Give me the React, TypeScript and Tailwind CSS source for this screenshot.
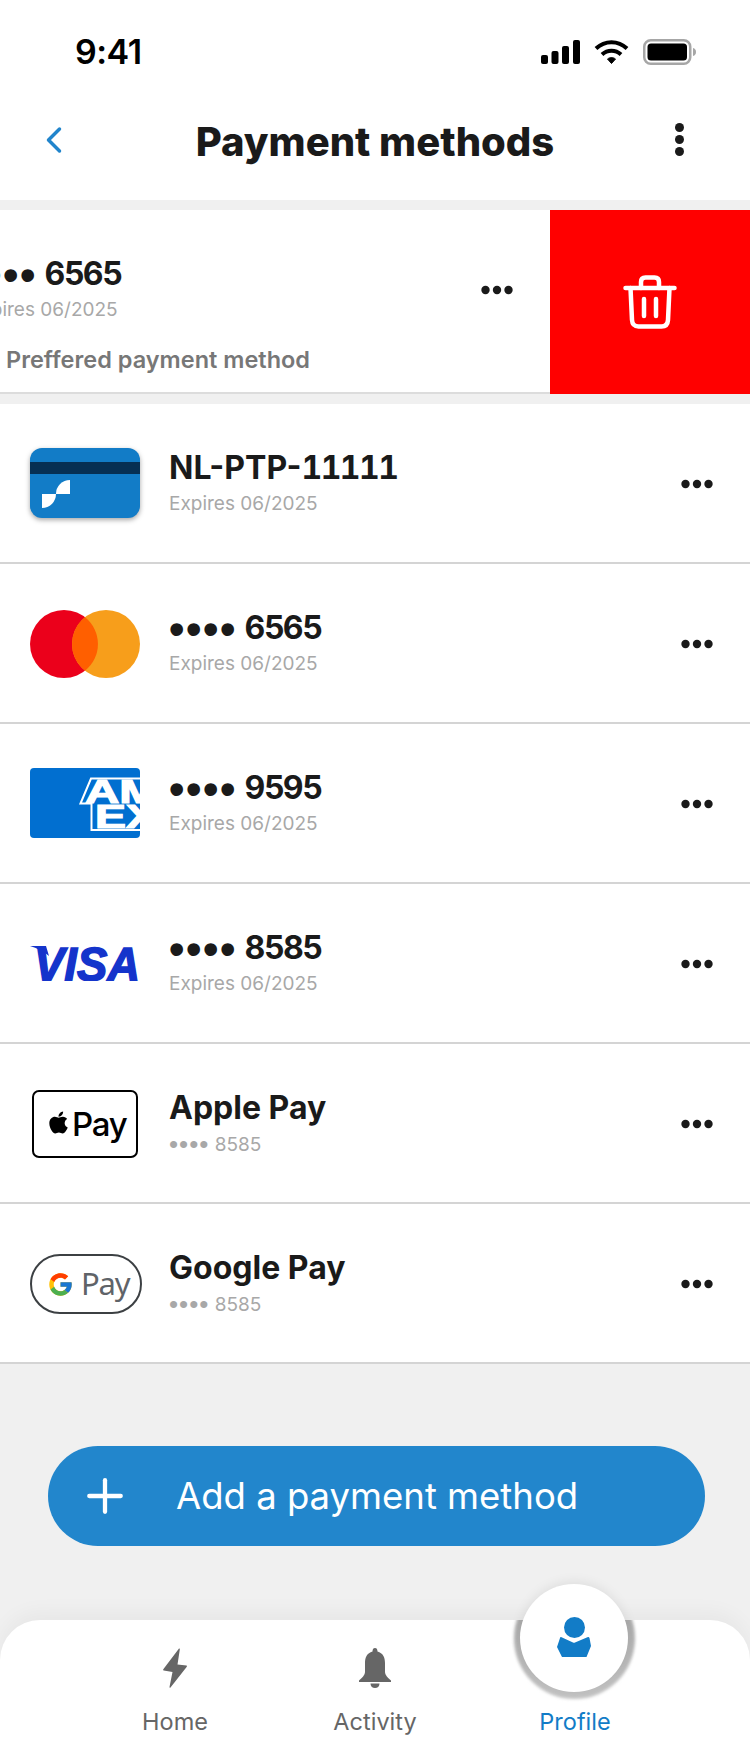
import { ChevronLeft, Plus } from "lucide-react";
import { FaApple } from "react-icons/fa";
import { FcGoogle } from "react-icons/fc";
import type { ReactNode } from "react";

const sans = "font-['Inter','Noto_Sans',sans-serif]";

function Dots({ className }: { className?: string }) {
	return (
		<svg width="32" height="10" viewBox="0 0 32 10" className={className}>
			<circle cx="4.5" cy="5" r="4.2" fill="#1a1a1a" />
			<circle cx="16" cy="5" r="4.2" fill="#1a1a1a" />
			<circle cx="27.5" cy="5" r="4.2" fill="#1a1a1a" />
		</svg>
	);
}

function StatusBar() {
	return (
		<div className="h-[86px] pt-[18px] pl-[75px] pr-[54px] flex items-center justify-between">
			<span className="font-['Inter',sans-serif] text-[34px] font-semibold leading-none text-black tracking-[-0.5px]">
				9:41
			</span>
			<div className="flex items-center gap-[14px]">
				<svg width="39" height="24" viewBox="0 0 39 24" fill="#000">
					<rect x="0" y="15" width="7" height="9" rx="2" />
					<rect x="10.5" y="11" width="7" height="13" rx="2" />
					<rect x="21" y="6" width="7" height="18" rx="2" />
					<rect x="32" y="0" width="7" height="24" rx="2" />
				</svg>
				<svg width="35" height="24" viewBox="0 0 35 24" fill="none" stroke="#000" strokeWidth="4">
					<path d="M2 8.5C11 0 24 0 33 8.5" />
					<path d="M8 14.5C13.500 9.500 21.500 9.500 27 14.500" />
					<path d="M13.500 19L17.500 23.500L21.500 19C19 17 16 17 13.500 19Z" fill="#000" strokeWidth="1" />
				</svg>
				<svg width="53" height="26" viewBox="0 0 53 26">
					<rect x="1.250" y="1.250" width="46" height="23.500" rx="6.500" fill="none" stroke="#a6a6a6" strokeWidth="2.500" />
					<rect x="4.500" y="4.500" width="39.500" height="17" rx="3.500" fill="#000" />
					<path d="M50 9C52 9.500 53 11 53 13C53 15 52 16.500 50 17Z" fill="#a6a6a6" />
				</svg>
			</div>
		</div>
	);
}

function Header() {
	return (
		<header className="h-[114px] grid grid-cols-[1fr_auto_1fr] items-center px-[66px]">
			<ChevronLeft size={44} strokeWidth={1.9} className="text-[#2185cc] -mt-[6px] -ml-[34px]" />
			<h1 className={`${sans} text-[40px] font-extrabold text-[#1a1a1a] leading-none -mt-[2px] whitespace-nowrap`}>
				Payment methods
			</h1>
			<div className="flex flex-col items-end gap-[3px] -mt-[8px]">
				<span className="size-[9px] rounded-full bg-[#1a1a1a]" />
				<span className="size-[9px] rounded-full bg-[#1a1a1a]" />
				<span className="size-[9px] rounded-full bg-[#1a1a1a]" />
			</div>
		</header>
	);
}

function BrandCard() {
	return (
		<div className="relative w-[110px] h-[70px] rounded-[12px] bg-[#127cc7] shadow-[0_2px_5px_rgba(0,0,0,0.35)] overflow-hidden">
			<div className="mt-[14px] h-[12px] bg-[#062f53]" />
			<svg width="28" height="28" viewBox="0 0 28 28" className="ml-[12px] mt-[6px]" fill="#fff">
				<path d="M0 14H14A14 14 0 0 1 0 28Z" />
				<path d="M28 0V14H14A14 14 0 0 1 28 0Z" />
			</svg>
		</div>
	);
}

function Mastercard() {
	return (
		<svg width="110" height="68" viewBox="0 0 110 68" className="block mt-[2px]">
			<circle cx="34" cy="34" r="34" fill="#eb001b" />
			<circle cx="76" cy="34" r="34" fill="#f79e1b" />
			<path d="M55 7.300A34 34 0 0 1 55 60.700A34 34 0 0 1 55 7.300Z" fill="#ff5f00" />
		</svg>
	);
}

function Amex() {
	return (
		<svg width="110" height="70" viewBox="0 0 110 70" className="block rounded-[4px]">
			<rect width="110" height="70" fill="#016fd0" />
			<path d="M50.500 35.500L61 10.500H112V62H61.500V35.500Z" fill="#016fd0" stroke="#fff" strokeWidth="2" />
			<text x="55" y="35" textLength="74" lengthAdjust="spacingAndGlyphs" fontFamily="Liberation Sans" fontWeight="700" fontSize="33" fill="#fff" stroke="#fff" strokeWidth="1.2">
				AM
			</text>
			<text x="65" y="60" textLength="62" lengthAdjust="spacingAndGlyphs" fontFamily="Liberation Sans" fontWeight="700" fontSize="33" fill="#fff" stroke="#fff" strokeWidth="1.2">
				EX
			</text>
		</svg>
	);
}

function Visa() {
	return (
		<svg width="110" height="36" viewBox="0 0 110 36" className="block">
			<path d="M0 1H16L19 11C13 6 7 3 0 1Z" fill="#1434cb" />
			<text
				x="4"
				y="35.500"
				fontFamily="Liberation Sans"
				fontWeight="700"
				fontStyle="italic"
				fontSize="49"
				textLength="106"
				lengthAdjust="spacingAndGlyphs"
				fill="#1434cb"
				stroke="#1434cb"
				strokeWidth="1.6"
			>
				VISA
			</text>
		</svg>
	);
}

function ApplePay() {
	return (
		<div className="ml-[2px] mt-[2px] w-[106px] h-[68px] rounded-[7px] border-[2.500px] border-black flex items-center pl-[12px]">
			<FaApple size={25} className="text-black -mt-[4px]" />
			<span className="font-['Inter',sans-serif] text-[33px] font-medium text-black leading-none tracking-[-1.2px] ml-[1px]">
				Pay
			</span>
		</div>
	);
}

function GooglePay() {
	return (
		<div className="mt-[2px] w-[112px] shrink-0 h-[60px] rounded-full border-[2.500px] border-[#3c4043] flex items-center pl-[15px]">
			<FcGoogle size={27} />
			<span className="font-['Noto_Sans',sans-serif] text-[31px] text-[#5f6368] leading-none tracking-[-1.2px] ml-[7px] -mt-[2px]">
				Pay
			</span>
		</div>
	);
}

function Masked({ last }: { last: string }) {
	return (
		<>
			<span className="font-['Liberation_Sans',sans-serif] text-[44px] tracking-[1.6px] align-[-5px]">••••</span>{" "}
			<span className="tracking-[-1.5px]">{last}</span>
		</>
	);
}

function MaskedSmall() {
	return (
		<>
			<span className="font-['Liberation_Sans',sans-serif] text-[26px] tracking-[1px] align-[-2px]">••••</span> 8585
		</>
	);
}

const rows: { logo: ReactNode; title: ReactNode; sub: ReactNode }[] = [
	{
		logo: <BrandCard />,
		title: (
			<>
				NL-PTP-<span className="tabular-nums tracking-[-1.5px]">11111</span>
			</>
		),
		sub: "Expires 06/2025",
	},
	{ logo: <Mastercard />, title: <Masked last="6565" />, sub: "Expires 06/2025" },
	{ logo: <Amex />, title: <Masked last="9595" />, sub: "Expires 06/2025" },
	{ logo: <Visa />, title: <Masked last="8585" />, sub: "Expires 06/2025" },
	{ logo: <ApplePay />, title: "Apple Pay", sub: <MaskedSmall /> },
	{ logo: <GooglePay />, title: "Google Pay", sub: <MaskedSmall /> },
];

function RowText({ title, sub }: { title: ReactNode; sub: ReactNode }) {
	return (
		<div className={`${sans} flex flex-col -mt-[1px]`}>
			<span className="h-[38px] text-[32px] font-bold leading-[38px] text-[#1a1a1a] whitespace-nowrap">{title}</span>
			<span className="h-[26px] text-[19px] leading-[26px] mt-[4px] text-[#a8a8a8] whitespace-nowrap">{sub}</span>
		</div>
	);
}

function SwipedRow() {
	return (
		<div className="mt-[10px] flex h-[184px]">
			<div className="w-[550px] bg-white border-b-2 border-[#dcdcdc] overflow-hidden pt-[46px] pl-[6px]">
				<div className="flex items-start -ml-[37px]">
					<RowText title={<Masked last="6565" />} sub="Expires 06/2025" />
					<Dots className="ml-auto mr-[37px] mt-[29px]" />
				</div>
				<p className={`${sans} mt-[23px] text-[23.5px] font-semibold leading-[28px] text-[#777]`}>
					Preffered payment method
				</p>
			</div>
			<div className="w-[200px] bg-[#ff0000] flex items-center justify-center">
				<svg width="54" height="54" viewBox="0 0 54 54" fill="none" stroke="#fff" strokeWidth="4.500" strokeLinecap="round" strokeLinejoin="round">
					<path d="M2.500 13H51.500" />
					<path d="M18 13V7C18 4 19.500 2.500 22.500 2.500H31.500C34.500 2.500 36 4 36 7V13" />
					<path d="M7.500 13L9 45C9.300 49.500 11.500 51.500 15.500 51.500H38.500C42.500 51.500 44.700 49.500 45 45L46.500 13" />
					<path d="M21 24V41M33 24V41" />
				</svg>
			</div>
		</div>
	);
}

function BottomNav() {
	return (
		<nav className="relative mt-auto h-[144px] rounded-t-[40px] bg-white shadow-[0_-8px_20px_rgba(0,0,0,0.04)]">
			<div className="absolute inset-0 overflow-hidden rounded-t-[40px]">
				<div className="absolute left-[514px] -top-[42px] size-[121px] rounded-full bg-gradient-to-b from-[#a0a0a0] to-[#c4c4c4] blur-[1.5px]" />
			</div>
			<div className="absolute left-[520px] -top-[36px] size-[108px] rounded-full bg-white flex items-center justify-center shadow-[0_-2px_12px_rgba(0,0,0,0.08)]">
				<svg width="34" height="40" viewBox="0 0 34 40" fill="#127cc7" className="-mt-[2px]">
					<circle cx="17.500" cy="10.500" r="10.500" />
					<path d="M4 20L16 25.500Q17 26 18 25.500L31 20Q32 19.700 32.500 21L34 29L29.500 40H5L0 30L3 21Q3.300 19.700 4 20Z" />
				</svg>
			</div>
			<div className={`${sans} relative grid grid-cols-3 px-[75px] pt-[28px] text-[23.5px] leading-[30px] text-[#666]`}>
				<div className="flex flex-col items-center">
					<svg width="24" height="40" viewBox="0 0 24 40" fill="#666">
						<path d="M16 0.500C16.500 0.300 17 0.800 16.800 1.500L14.500 16.500L23.500 17.500C24 17.600 24 18.300 23.800 18.700L7.500 39.500C7 40 6.300 39.700 6.500 39L9.500 24L0.700 22.500C0 22.300 0 21.700 0.300 21.200Z" />
					</svg>
					<span className="mt-[19px]">Home</span>
				</div>
				<div className="flex flex-col items-center">
					<svg width="32" height="40" viewBox="0 0 32 40" fill="#666">
						<path d="M16 0C17.500 0 18.500 1 18.500 3.500C24 5 26 9.500 26 15V24C26 27 29 30 32 32.500V34H0V32.500C3 30 6 27 6 24V15C6 9.500 8 5 13.500 3.500C13.500 1 14.500 0 16 0Z" />
						<path d="M11.500 35.500H20.500C20.500 38.500 18.500 40 16 40C13.500 40 11.500 38.500 11.500 35.500Z" />
					</svg>
					<span className="mt-[19px]">Activity</span>
				</div>
				<div className="flex flex-col items-center text-[#127cc7]">
					<span className="mt-[59px]">Profile</span>
				</div>
			</div>
		</nav>
	);
}

export default function App() {
	return (
		<div className="w-[750px] h-[1764px] flex flex-col bg-[#f0f0f0] overflow-hidden">
			<div className="bg-white">
				<StatusBar />
				<Header />
			</div>

			<SwipedRow />

			<div className="mt-[10px]">
				{rows.map((row, i) => (
					<div key={i} className="h-[160px] bg-white border-b-2 border-[#d4d4d4] flex items-center pl-[30px] pr-[37px]">
						<div className="w-[110px] shrink-0 flex justify-start">{row.logo}</div>
						<div className="ml-[29px]">
							<RowText title={row.title} sub={row.sub} />
						</div>
						<Dots className="ml-auto mt-[2px]" />
					</div>
				))}
			</div>

			<button className={`${sans} mt-[82px] ml-[48px] w-[657px] h-[100px] rounded-full bg-[#2286cc] flex items-center pl-[30px] text-white text-[36.5px] leading-none shrink-0`}>
				<Plus size={54} strokeWidth={1.900} />
				<span className="ml-[44px]">Add a payment method</span>
			</button>

			<BottomNav />
		</div>
	);
}
